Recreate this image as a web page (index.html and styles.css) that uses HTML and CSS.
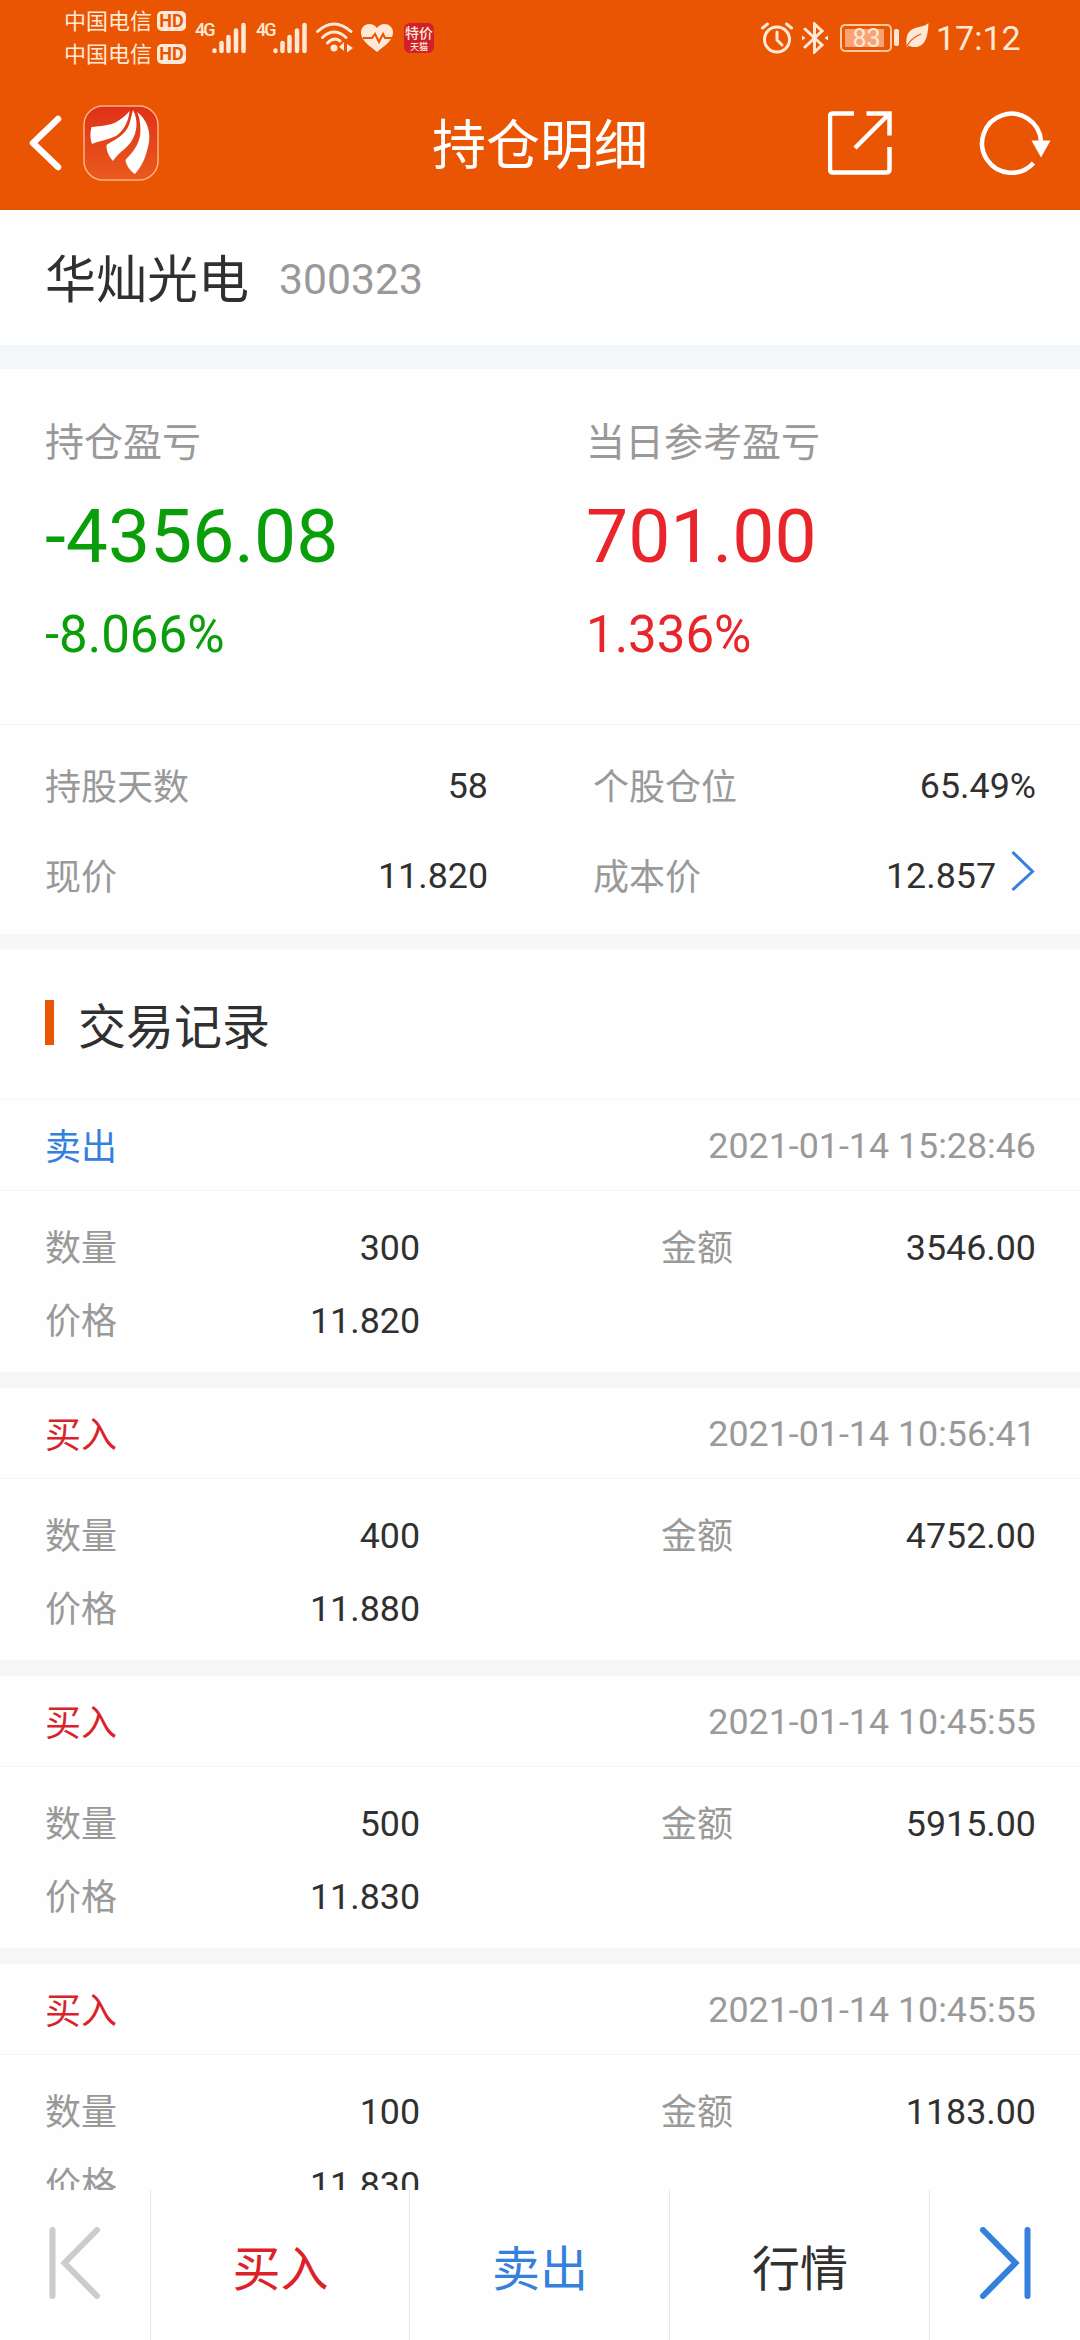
FILE: index.html
```
<!DOCTYPE html>
<html lang="zh-CN">
<head>
	<meta charset="utf-8">
	<title>持仓明细</title>
	<link rel="stylesheet" href="styles.css">
</head>
<body>
<header>
	<div id="status">
		<div id="carriers">
			<div class="carrier">中国电信<span class="hd">HD</span></div>
			<div class="carrier">中国电信<span class="hd">HD</span></div>
		</div>
		<div class="signal">
			<span>4G</span>
			<svg width="34" height="32" viewBox="0 0 34 32"><path d="M2.500 28.500v.5M9.500 21v8M16.500 15v14M24 8.500v20.500M31.500 3v26" /></svg>
		</div>
		<div class="signal">
			<span>4G</span>
			<svg width="34" height="32" viewBox="0 0 34 32"><path d="M2.500 28.500v.5M9.500 21v8M16.500 15v14M24 8.500v20.500M31.500 3v26" /></svg>
		</div>
		<svg id="wifi" width="37" height="31" viewBox="0 0 37 31">
			<path class="line" d="M1.500 9.500Q18 -5.500 35 9.500M6.500 15.500Q18 4.500 30 15.500M11.500 21Q18 14.500 24 19" />
			<circle cx="18" cy="26" r="3.500" />
			<path d="M28 20v9l-5-4zM31 22l6 4-6 4.500z" />
		</svg>
		<svg id="heart" width="32" height="28" viewBox="0 0 32 28">
			<path d="M16 28C9 22 0 17 0 8.500 0 0 11-3 16 4 21-3 32 0 32 8.500 32 17 23 22 16 28z" />
			<path class="pulse" d="M2 14h9l3-4 4 8 4-8 2 4h7" />
		</svg>
		<div id="app"><b>特价</b><i>天猫</i></div>
		<div id="statusRight">
			<svg width="32" height="32" viewBox="0 0 32 32">
				<circle class="line" cx="16" cy="17.500" r="12.500" />
				<path class="line" d="M16 10v8l5 5M1.500 6l5-4M30.500 6l-5-4" />
			</svg>
			<svg id="bt" width="26" height="32" viewBox="0 0 26 32">
				<path class="line" d="M3 7l17 16-7.500 7V2L20 9 3 25" />
				<path d="M0 13.500l3.500 2.500L0 18.500zM26 13.500L22.500 16l3.500 2.500z" />
			</svg>
			<div id="battery"><span>83</span></div>
			<div id="cap"></div>
			<svg id="leaf" width="23" height="25" viewBox="0 0 23 25">
				<path d="M22.500 0C22 10 21 23 10 24 6 24.500 4 23 2.500 22.500L1 24.500C-2 9 6 5 13 4 18 3 20 2 22.500 0z" />
				<path class="vein" d="M1 23C4 17 8 14 15 11" />
			</svg>
			<div id="time">17:12</div>
		</div>
	</div>
	<nav>
		<svg id="back" width="34" height="56" viewBox="0 0 34 56"><path d="M29 4L4 28l25 24" /></svg>
		<svg id="logo" width="76" height="76" viewBox="0 0 76 76">
			<defs>
				<linearGradient id="red" x1="0" y1="0" x2="0" y2="1">
					<stop offset="0" stop-color="#df3119" />
					<stop offset="1" stop-color="#ea5a1c" />
				</linearGradient>
			</defs>
			<rect x="1" y="1" width="74" height="74" rx="19" fill="url(#red)" stroke="#ffb184" stroke-width="1.500" />
			<path d="M46.500 6C46 14 42 25 33 31 25 35 15 36 9 39 7 34 7 27 8.500 22 17 21 27 21 35 16 40 13 44 9 46.500 6z" />
			<path d="M50 5C55 14 55 27 48 37 42 45 35 48 30 56 26 52 23 45 23.500 40 33 34 42 30 46 20 48 14 48.500 10 50 5z" />
			<path d="M54 7C64 14 69 28 65 42 62 54 59 61 52 69 47 66 43 60 42.500 55 49 48 55 41 57 31 58 22 57 13 54 7z" />
		</svg>
		<h1>持仓明细</h1>
		<svg id="share" width="64" height="64" viewBox="0 0 64 64">
			<path d="M26 2.500H5Q2 2.500 2 5.500V58Q2 61.500 5 61.500H58Q61.500 61.500 61.500 58V36M38.500 2.500H61.500V24.500M61 3L27 37" />
		</svg>
		<svg id="refresh" width="72" height="66" viewBox="0 0 72 66">
			<path class="ring" d="M54.500 53A29.500 29.500 0 1 1 62 31" />
			<path d="M52.500 30.500h19L62 47.500z" />
		</svg>
	</nav>
</header>

<section id="stock">
	<span id="name">华灿光电</span>
	<span id="code">300323</span>
</section>

<section id="profit">
	<div class="green">
		<label>持仓盈亏</label>
		<div class="big">-4356.08</div>
		<div class="percent">-8.066%</div>
	</div>
	<div class="red">
		<label>当日参考盈亏</label>
		<div class="big">701.00</div>
		<div class="percent">1.336%</div>
	</div>
</section>

<section id="info">
	<div class="pair"><label>持股天数</label><span>58</span></div>
	<div class="pair"><label>个股仓位</label><span>65.49%</span></div>
	<div class="pair"><label>现价</label><span>11.820</span></div>
	<div class="pair">
		<label>成本价</label><span>12.857</span>
		<svg id="more" width="24" height="42" viewBox="0 0 24 42"><path d="M1.500 2L21.500 21.500 1.500 40" /></svg>
	</div>
</section>

<h2>交易记录</h2>

<section id="records">
	<div class="record">
		<div class="head"><span class="sell">卖出</span><time>2021-01-14 15:28:46</time></div>
		<div class="detail">
			<div class="pair"><label>数量</label><span>300</span></div>
			<div class="pair"><label>金额</label><span>3546.00</span></div>
			<div class="pair"><label>价格</label><span>11.820</span></div>
		</div>
	</div>
	<div class="record">
		<div class="head"><span class="buy">买入</span><time>2021-01-14 10:56:41</time></div>
		<div class="detail">
			<div class="pair"><label>数量</label><span>400</span></div>
			<div class="pair"><label>金额</label><span>4752.00</span></div>
			<div class="pair"><label>价格</label><span>11.880</span></div>
		</div>
	</div>
	<div class="record">
		<div class="head"><span class="buy">买入</span><time>2021-01-14 10:45:55</time></div>
		<div class="detail">
			<div class="pair"><label>数量</label><span>500</span></div>
			<div class="pair"><label>金额</label><span>5915.00</span></div>
			<div class="pair"><label>价格</label><span>11.830</span></div>
		</div>
	</div>
	<div class="record">
		<div class="head"><span class="buy">买入</span><time>2021-01-14 10:45:55</time></div>
		<div class="detail">
			<div class="pair"><label>数量</label><span>100</span></div>
			<div class="pair"><label>金额</label><span>1183.00</span></div>
			<div class="pair"><label>价格</label><span>11.830</span></div>
		</div>
	</div>
</section>

<footer>
	<div class="prev"><svg width="52" height="72" viewBox="0 0 52 72"><path d="M3.500 3v66M48 3L15.500 36 48 69" /></svg></div>
	<div class="buy">买入</div>
	<div class="sell">卖出</div>
	<div>行情</div>
	<div class="next"><svg width="52" height="72" viewBox="0 0 52 72"><path d="M48.500 3v66M4 3L36.500 36 4 69" /></svg></div>
</footer>
</body>
</html>
```
FILE: styles.css
```
* {
	box-sizing: border-box;
}
body {
	margin: 0;
	width: 1080px;
	height: 2340px;
	overflow: hidden;
	display: flex;
	flex-direction: column;
	background-color: #fefefe;
	color: #303030;
	font-family: Roboto, "Noto Sans CJK SC", sans-serif;
	font-size: 36px;
}
svg {
	flex: none;
	display: block;
}

/* orange top */
header {
	height: 210px;
	flex: none;
	background-color: #e95502;
	color: white;
}
#status {
	height: 75px;
	padding: 0 61px 0 64px;
	display: flex;
	align-items: center;
	color: #ffe9d6;
}
#status svg {
	fill: #ffe9d6;
}
#status .line {
	fill: none;
	stroke: #ffe9d6;
	stroke-width: 3;
	stroke-linecap: round;
}
#carriers {
	width: 131px;
	flex: none;
}
.carrier {
	height: 33px;
	display: flex;
	align-items: center;
	font-size: 22px;
	line-height: 33px;
}
.hd {
	width: 29px;
	height: 20px;
	margin-left: 5px;
	border-radius: 5px;
	background-color: #ffe9d6;
	color: #e95502;
	font-size: 18px;
	font-weight: 700;
	line-height: 20px;
	text-align: center;
}
.signal {
	width: 61px;
	height: 32px;
	flex: none;
	display: flex;
}
.signal span {
	width: 17px;
	font-size: 18px;
	font-weight: 500;
	line-height: 15px;
	letter-spacing: -2px;
}
.signal svg path {
	stroke: #ffe9d6;
	stroke-width: 4.5;
	stroke-linecap: round;
}
#wifi {
	margin-left: -1px;
}
#heart {
	margin-left: 8px;
}
#heart .pulse {
	fill: none;
	stroke: #e95502;
	stroke-width: 2;
}
#app {
	width: 30px;
	height: 30px;
	margin-left: 11px;
	overflow: hidden;
	border-radius: 6px;
	background-color: #d0202b;
	text-align: center;
}
#app b, #app i {
	display: block;
	font-size: 14px;
	font-weight: 500;
	line-height: 20px;
	white-space: nowrap;
}
#app i {
	font-size: 9px;
	font-style: normal;
	line-height: 9px;
}
#statusRight {
	margin-left: auto;
	display: flex;
	align-items: center;
}
#bt {
	margin-left: 9px;
}
#battery {
	width: 52px;
	height: 28px;
	margin-left: 12px;
	padding: 3px;
	border: 2px solid #ffc79c;
	border-radius: 5px;
}
#battery span {
	display: block;
	width: 39px;
	height: 18px;
	padding-left: 4px;
	background-color: #f9a274;
	font-size: 25px;
	line-height: 19px;
	text-align: center;
}
#cap {
	width: 5px;
	height: 17px;
	margin-left: 2px;
	border-radius: 2px;
	background-color: #ffe9d6;
}
#leaf {
	margin: 0 7px 4px 7px;
}
#leaf .vein {
	fill: none;
	stroke: #e95502;
	stroke-width: 1.2;
}
#time {
	width: 83px;
	font-size: 34px;
	line-height: 40px;
}
nav {
	height: 135px;
	padding: 0 29px;
	display: flex;
	align-items: center;
}
nav svg {
	fill: white;
}
#back path, #share path, #refresh .ring {
	fill: none;
	stroke: white;
	stroke-width: 4.5;
}
#back path {
	stroke-width: 6.5;
	stroke-linecap: round;
	stroke-linejoin: round;
}
#logo {
	margin-left: 20px;
}
h1 {
	margin: 0 0 0 273px;
	padding-top: 8px;
	font-size: 54px;
	font-weight: 400;
	line-height: 80px;
}
#share {
	margin-left: auto;
}
#refresh {
	margin-left: 87px;
}

/* stock name */
#stock {
	height: 159px;
	flex: none;
	padding: 0 45px;
	border-bottom: 24px solid #f4f7fa;
	display: flex;
	align-items: center;
	background-color: white;
}
#name {
	padding-bottom: 3px;
	font-size: 51px;
}
#code {
	margin-left: 30px;
	padding-top: 3px;
	color: #999;
	font-size: 42.7px;
}

/* profit */
#profit {
	height: 356px;
	flex: none;
	padding: 44px 45px 0;
	border-bottom: 1px solid #f5f5f5;
	display: grid;
	grid-template-columns: 541px 1fr;
}
label, time {
	color: #999;
}
#profit label {
	display: block;
	font-size: 39px;
	line-height: 60px;
}
.big {
	height: 126px;
	font-size: 75px;
	line-height: 126px;
}
.percent {
	height: 72px;
	font-size: 51px;
	line-height: 72px;
}
.green {
	color: #0a9e0a;
}
.red, .buy {
	color: #e8252a;
}
.sell {
	color: #3580dc;
}
.buy {
	color: #dc2228;
}

/* label + value rows */
.pair {
	display: flex;
	align-items: center;
}
.pair label, .head span {
	padding-bottom: 3px;
}
.pair span, time {
	padding-top: 2px;
	font-size: 35.8px;
}
.pair span {
	margin-left: auto;
}
#info {
	height: 224px;
	flex: none;
	padding: 15px 44px 0 45px;
	border-bottom: 15px solid #f7f7f7;
	display: grid;
	grid-template-columns: 443px 443px;
	grid-auto-rows: 90px;
	column-gap: 105px;
}
#more {
	margin: 0 1px 8px 15px;
	fill: none;
	stroke: #3580dc;
	stroke-width: 3;
}
h2 {
	height: 150px;
	flex: none;
	margin: 0;
	padding: 0 45px 3px;
	display: flex;
	align-items: center;
	font-size: 48px;
	font-weight: 400;
}
h2:before {
	content: "";
	width: 9px;
	height: 45px;
	margin-right: 24px;
	background-color: #e95502;
}

/* records */
#records {
	height: 1091px;
	flex: none;
	overflow: hidden;
}
.record {
	height: 288px;
	border-bottom: 15px solid #f7f7f7;
}
.head {
	height: 92px;
	padding: 0 44px 0 45px;
	border-top: 1px solid #f7f7f7;
	border-bottom: 1px solid #f5f5f5;
	display: flex;
	align-items: center;
	justify-content: space-between;
}
.detail {
	padding: 19px 44px 0 45px;
	display: grid;
	grid-template-columns: 375px 375px;
	grid-auto-rows: 73px;
	column-gap: 241px;
}

/* bottom bar */
footer {
	height: 150px;
	flex: none;
	display: grid;
	grid-template-columns: 151px 259px 260px 260px 150px;
	background-color: #fefefe;
	font-size: 48px;
}
footer div {
	padding: 0 0 1px 1px;
	border-right: 1px solid #e8e8e8;
	display: flex;
	align-items: center;
	justify-content: center;
}
footer .prev, footer .next {
	padding: 0 0 5px;
}
footer .next {
	border: 0;
}
footer path {
	fill: none;
	stroke: #ccc;
	stroke-width: 6;
	stroke-linecap: round;
}
footer .next path {
	stroke: #3580dc;
}
```
